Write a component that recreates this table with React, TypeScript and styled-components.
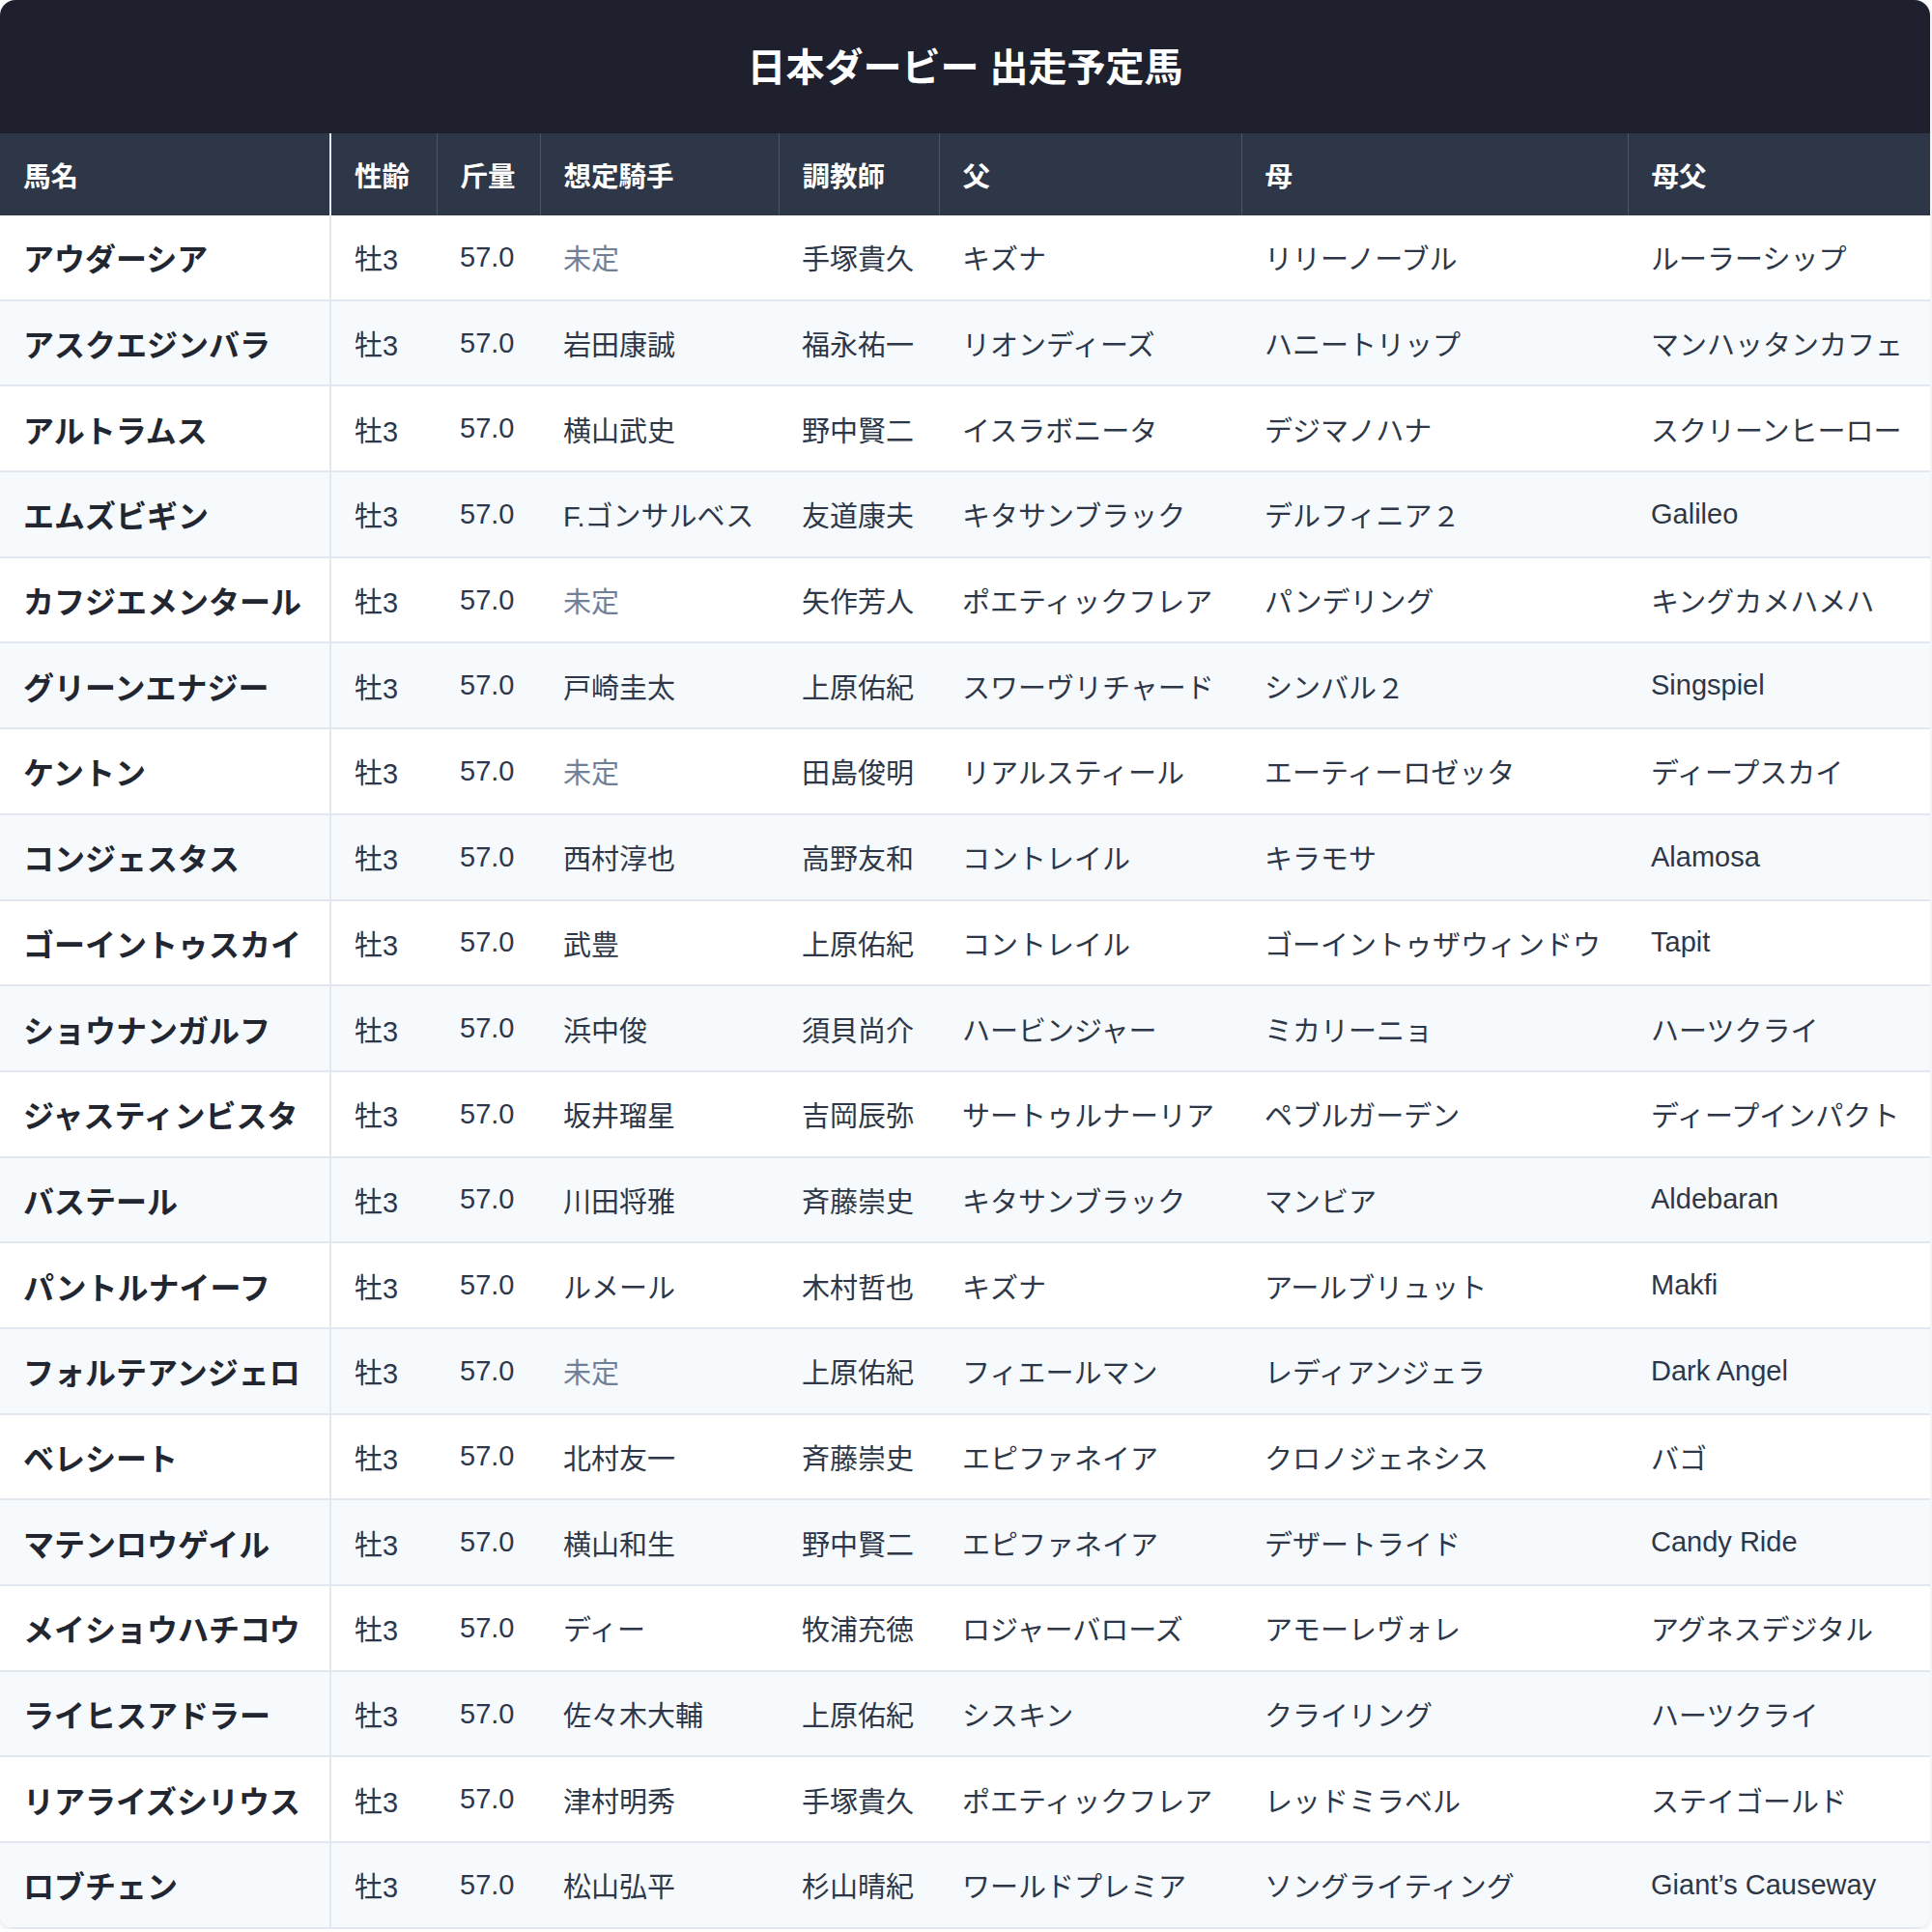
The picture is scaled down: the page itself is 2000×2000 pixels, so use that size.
import { FC } from "react";
import styled, { createGlobalStyle } from "styled-components";

const GlobalStyle = createGlobalStyle`
  html, body {
    margin: 0;
    padding: 0;
    background: #ffffff;
  }
  body {
    font-family: "Liberation Sans", "Noto Sans CJK JP", sans-serif;
  }
`;

type Horse = {
  name: string;
  sexAge: string;
  weight: string;
  jockey: string;
  trainer: string;
  sire: string;
  dam: string;
  damSire: string;
};

const horses: Horse[] = [
  { name: "アウダーシア", sexAge: "牡3", weight: "57.0", jockey: "未定", trainer: "手塚貴久", sire: "キズナ", dam: "リリーノーブル", damSire: "ルーラーシップ" },
  { name: "アスクエジンバラ", sexAge: "牡3", weight: "57.0", jockey: "岩田康誠", trainer: "福永祐一", sire: "リオンディーズ", dam: "ハニートリップ", damSire: "マンハッタンカフェ" },
  { name: "アルトラムス", sexAge: "牡3", weight: "57.0", jockey: "横山武史", trainer: "野中賢二", sire: "イスラボニータ", dam: "デジマノハナ", damSire: "スクリーンヒーロー" },
  { name: "エムズビギン", sexAge: "牡3", weight: "57.0", jockey: "F.ゴンサルベス", trainer: "友道康夫", sire: "キタサンブラック", dam: "デルフィニア２", damSire: "Galileo" },
  { name: "カフジエメンタール", sexAge: "牡3", weight: "57.0", jockey: "未定", trainer: "矢作芳人", sire: "ポエティックフレア", dam: "パンデリング", damSire: "キングカメハメハ" },
  { name: "グリーンエナジー", sexAge: "牡3", weight: "57.0", jockey: "戸崎圭太", trainer: "上原佑紀", sire: "スワーヴリチャード", dam: "シンバル２", damSire: "Singspiel" },
  { name: "ケントン", sexAge: "牡3", weight: "57.0", jockey: "未定", trainer: "田島俊明", sire: "リアルスティール", dam: "エーティーロゼッタ", damSire: "ディープスカイ" },
  { name: "コンジェスタス", sexAge: "牡3", weight: "57.0", jockey: "西村淳也", trainer: "高野友和", sire: "コントレイル", dam: "キラモサ", damSire: "Alamosa" },
  { name: "ゴーイントゥスカイ", sexAge: "牡3", weight: "57.0", jockey: "武豊", trainer: "上原佑紀", sire: "コントレイル", dam: "ゴーイントゥザウィンドウ", damSire: "Tapit" },
  { name: "ショウナンガルフ", sexAge: "牡3", weight: "57.0", jockey: "浜中俊", trainer: "須貝尚介", sire: "ハービンジャー", dam: "ミカリーニョ", damSire: "ハーツクライ" },
  { name: "ジャスティンビスタ", sexAge: "牡3", weight: "57.0", jockey: "坂井瑠星", trainer: "吉岡辰弥", sire: "サートゥルナーリア", dam: "ペブルガーデン", damSire: "ディープインパクト" },
  { name: "バステール", sexAge: "牡3", weight: "57.0", jockey: "川田将雅", trainer: "斉藤崇史", sire: "キタサンブラック", dam: "マンビア", damSire: "Aldebaran" },
  { name: "パントルナイーフ", sexAge: "牡3", weight: "57.0", jockey: "ルメール", trainer: "木村哲也", sire: "キズナ", dam: "アールブリュット", damSire: "Makfi" },
  { name: "フォルテアンジェロ", sexAge: "牡3", weight: "57.0", jockey: "未定", trainer: "上原佑紀", sire: "フィエールマン", dam: "レディアンジェラ", damSire: "Dark Angel" },
  { name: "ベレシート", sexAge: "牡3", weight: "57.0", jockey: "北村友一", trainer: "斉藤崇史", sire: "エピファネイア", dam: "クロノジェネシス", damSire: "バゴ" },
  { name: "マテンロウゲイル", sexAge: "牡3", weight: "57.0", jockey: "横山和生", trainer: "野中賢二", sire: "エピファネイア", dam: "デザートライド", damSire: "Candy Ride" },
  { name: "メイショウハチコウ", sexAge: "牡3", weight: "57.0", jockey: "ディー", trainer: "牧浦充徳", sire: "ロジャーバローズ", dam: "アモーレヴォレ", damSire: "アグネスデジタル" },
  { name: "ライヒスアドラー", sexAge: "牡3", weight: "57.0", jockey: "佐々木大輔", trainer: "上原佑紀", sire: "シスキン", dam: "クライリング", damSire: "ハーツクライ" },
  { name: "リアライズシリウス", sexAge: "牡3", weight: "57.0", jockey: "津村明秀", trainer: "手塚貴久", sire: "ポエティックフレア", dam: "レッドミラベル", damSire: "ステイゴールド" },
  { name: "ロブチェン", sexAge: "牡3", weight: "57.0", jockey: "松山弘平", trainer: "杉山晴紀", sire: "ワールドプレミア", dam: "ソングライティング", damSire: "Giant’s Causeway" },
];

const columns = [
  { label: "馬名", width: 342 },
  { label: "性齢", width: 110 },
  { label: "斤量", width: 107 },
  { label: "想定騎手", width: 247 },
  { label: "調教師", width: 166 },
  { label: "父", width: 313 },
  { label: "母", width: 400 },
  { label: "母父", width: 313 },
];

const Card = styled.div`
  width: 1998px;
  background: #ffffff;
  border-radius: 16px;
  overflow: hidden;
  box-shadow: 0 2px 6px rgba(15, 23, 42, 0.12);
`;

const TitleBar = styled.div`
  height: 138px;
  display: flex;
  align-items: center;
  justify-content: center;
  background: #1e212d;
`;

const Title = styled.h1`
  margin: 0 0 4px;
  color: #ffffff;
  font-size: 40px;
  font-weight: 700;
`;

const Table = styled.table`
  width: 100%;
  border-collapse: collapse;
  table-layout: fixed;
`;

const HeadCell = styled.th<{ $sticky?: boolean }>`
  height: 85px;
  padding: 0 24px;
  background: #2d3748;
  color: #ffffff;
  font-size: 28.5px;
  font-weight: 700;
  text-align: left;
  white-space: nowrap;
  border-right: ${(p) => (p.$sticky ? "2px solid #e2e8f0" : "1px solid #4a5568")};

  &:last-child {
    border-right: none;
  }
`;

const Row = styled.tr<{ $even: boolean }>`
  background: ${(p) => (p.$even ? "#f7fafc" : "#ffffff")};
  border-bottom: 2px solid #e2e8f0;
`;

const Cell = styled.td<{ $muted?: boolean }>`
  height: 86.7px;
  padding: 0 24px;
  font-size: 29px;
  color: ${(p) => (p.$muted ? "#718096" : "#2d3748")};
  white-space: nowrap;
`;

const NameCell = styled.td`
  height: 86.7px;
  padding: 0 24px;
  font-size: 32px;
  font-weight: 700;
  color: #222631;
  white-space: nowrap;
  border-right: 2px solid #e2e8f0;
`;

export const App: FC = () => {
  return (
    <>
      <GlobalStyle />
      <Card>
        <TitleBar>
          <Title>日本ダービー 出走予定馬</Title>
        </TitleBar>
        <Table>
          <colgroup>
            {columns.map((c) => (
              <col key={c.label} style={{ width: c.width }} />
            ))}
          </colgroup>
          <thead>
            <tr>
              {columns.map((c, i) => (
                <HeadCell key={c.label} $sticky={i === 0}>
                  {c.label}
                </HeadCell>
              ))}
            </tr>
          </thead>
          <tbody>
            {horses.map((h, i) => (
              <Row key={h.name} $even={i % 2 === 1}>
                <NameCell>{h.name}</NameCell>
                <Cell>{h.sexAge}</Cell>
                <Cell>{h.weight}</Cell>
                <Cell $muted={h.jockey === "未定"}>{h.jockey}</Cell>
                <Cell>{h.trainer}</Cell>
                <Cell>{h.sire}</Cell>
                <Cell>{h.dam}</Cell>
                <Cell>{h.damSire}</Cell>
              </Row>
            ))}
          </tbody>
        </Table>
      </Card>
    </>
  );
};

export default App;
